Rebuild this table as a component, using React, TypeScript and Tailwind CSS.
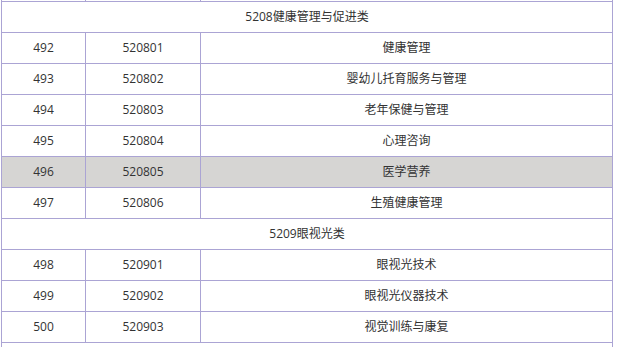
type Row =
  | { kind: "item"; no: string; code: string; name: string; active?: boolean }
  | { kind: "group"; title: string };

// first row is the one scrolled mostly out of view above the top edge
const rows: Row[] = [
  { kind: "item", no: "", code: "", name: "" },
  { kind: "group", title: "5208健康管理与促进类" },
  { kind: "item", no: "492", code: "520801", name: "健康管理" },
  { kind: "item", no: "493", code: "520802", name: "婴幼儿托育服务与管理" },
  { kind: "item", no: "494", code: "520803", name: "老年保健与管理" },
  { kind: "item", no: "495", code: "520804", name: "心理咨询" },
  { kind: "item", no: "496", code: "520805", name: "医学营养", active: true },
  { kind: "item", no: "497", code: "520806", name: "生殖健康管理" },
  { kind: "group", title: "5209眼视光类" },
  { kind: "item", no: "498", code: "520901", name: "眼视光技术" },
  { kind: "item", no: "499", code: "520902", name: "眼视光仪器技术" },
  { kind: "item", no: "500", code: "520903", name: "视觉训练与康复" },
  { kind: "group", title: "" },
];

const cell =
  "h-[31px] flex items-center justify-center border-r border-b border-[#aba4d4]";

export default function App() {
  return (
    <div
      className="w-[617px] h-[347px] overflow-hidden bg-white text-[12px] text-[#333333]"
      style={{ fontFamily: '"Open Sans", "Noto Sans CJK SC", sans-serif' }}
    >
      <div className="ml-px -mt-[29px] w-[612px] border-l border-[#aba4d4]">
        {rows.map((r, i) =>
          r.kind === "group" ? (
            <div key={i} className={cell}>
              {r.title}
            </div>
          ) : (
            <div
              key={i}
              className={`grid grid-cols-[84px_115px_412px] ${r.active ? "bg-[#d6d5d3]" : ""}`}
            >
              <div className={cell}>{r.no}</div>
              <div className={cell}>{r.code}</div>
              <div className={cell}>{r.name}</div>
            </div>
          )
        )}
      </div>
    </div>
  );
}
